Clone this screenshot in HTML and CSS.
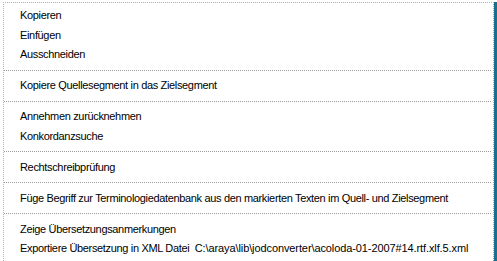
FILE: index.html
```html
<!DOCTYPE html>
<html lang="de">
<head>
    <meta charset="UTF-8">
    <title>Kontextmenü</title>
    <link rel="stylesheet" href="styles.css">
</head>
<body>
    <div class="screen">
        <ul class="menu">
            <li class="item">Kopieren</li>
            <li class="item">Einfügen</li>
            <li class="item">Ausschneiden</li>
            <li class="sep"></li>
            <li class="item">Kopiere Quellesegment in das Zielsegment</li>
            <li class="sep"></li>
            <li class="item">Annehmen zurücknehmen</li>
            <li class="item">Konkordanzsuche</li>
            <li class="sep"></li>
            <li class="item">Rechtschreibprüfung</li>
            <li class="sep"></li>
            <li class="item">Füge Begriff zur Terminologiedatenbank aus den markierten Texten im Quell- und Zielsegment</li>
            <li class="sep"></li>
            <li class="item">Zeige Übersetzungsanmerkungen</li>
            <li class="item">Exportiere Übersetzung in XML Datei&nbsp; <span class="path">C:\araya\lib\jodconverter\acoloda-01-2007#14.rtf.xlf.5.xml</span></li>
        </ul>
        <div class="edge"></div>
    </div>
</body>
</html>
```

FILE: styles.css
```css
/* context menu, classic windows look */
html, body {
    margin: 0;
    padding: 0;
    background: #fff;
}

.screen {
    width: 497px;
    height: 261px;
    display: flex;
    overflow: hidden;
}

.menu {
    list-style: none;
    margin: 2px 0 0 3px;
    padding: 3px 0 0 0;
    width: 489px;
    border-top: 1px dotted #b8b0a8;
    border-left: 1px dotted #d8a8a8;
    border-right: 1px dotted #a8a8a0;
    font-family: "Liberation Sans", Arial, sans-serif;
    font-size: 11px;
    letter-spacing: -0.34px;
    color: #000;
}

.item {
    height: 19.5px;
    line-height: 19.5px;
    padding-left: 16px;
    white-space: nowrap;
}

.path {
    letter-spacing: -0.1px;
}

.sep {
    height: 11.5px;
    display: flex;
    align-items: center;
    margin-right: 2px;
}

.sep::before {
    content: "";
    flex: 1;
    border-top: 1px dotted #9c9c98;
}

.edge {
    flex: 1;
    margin-top: 2px;
    background: #1d6f8c;
}
```
